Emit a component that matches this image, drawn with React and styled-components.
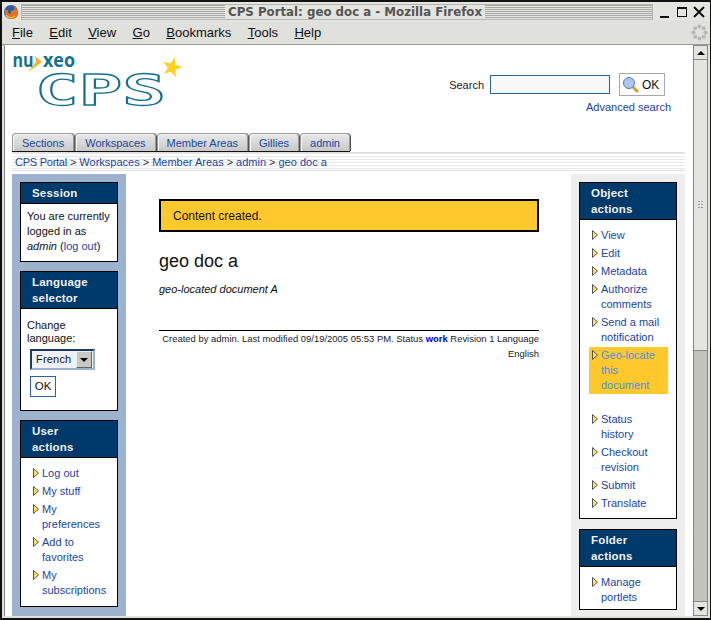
import React from "react";
import styled, { createGlobalStyle } from "styled-components";

const Global = createGlobalStyle`
  html, body { margin: 0; padding: 0; background: #fff; }
  body { font-family: "Liberation Sans", Arial, sans-serif; }
  a { color: #1c45a0; text-decoration: none; }
`;

const Frame = styled.div`
  width: 711px; height: 620px; box-sizing: border-box; overflow: hidden;
  display: flex; flex-direction: column; background: #e0e0dc; padding-bottom: 2px;
  border: 2px solid #111; border-right-width: 1px;
`;
const TitleBar = styled.div`
  height: 19px; flex: none; display: flex; align-items: center; background: #e4e4e0; padding: 0 4px 0 1px;
`;
const Fox = styled.svg`width: 16px; height: 16px; flex: none; margin-right: 2px;`;
const Groove = styled.div`
  flex: 1; height: 14px; display: flex; align-items: center; justify-content: center; padding-left: 36px;
  background: repeating-linear-gradient(180deg, #a8a8a4 0 1px, #e4e4e0 1px 2px);
  border: 1px solid #b4b4b0;
`;
const Title = styled.span`
  background: #e4e4e0; padding: 0 3px; font: bold 11.8px "DejaVu Sans", sans-serif; color: #555; line-height: 14px;
`;
const WinButtons = styled.div`display: flex; gap: 3px; margin-left: 5px; align-items: center;`;
const MenuBar = styled.div`
  height: 23px; flex: none; display: flex; align-items: center; padding-left: 10px; gap: 16.400px;
  background: #e0e0dc; border-bottom: 1px solid #9a9a96; position: relative;
  font: 13px "Liberation Sans", sans-serif; color: #111;
`;
const MenuItem = styled.span`
  &::first-letter { text-decoration: underline; }
`;
const Throbber = styled.svg`position: absolute; right: 2px; top: 3px; width: 17px; height: 17px;`;
const Viewport = styled.div`flex: 1; min-height: 0; display: flex; margin-left: 2px; border-left: 1px solid #888;`;
const Page = styled.div`flex: 1; min-width: 0; overflow: hidden; background: #fff; padding: 0 8px 0 7px; color: #111; font-size: 11px;`;
const Scrollbar = styled.div`
  width: 15px; flex: none; margin-right: 2px; display: flex; flex-direction: column; background: #c3c3be;
  border: 1px solid #888; box-sizing: border-box;
`;
const ScrollBtn = styled.div`
  height: 13px; flex: none; display: flex; align-items: center; justify-content: center; background: #e4e4e0;
  ${p => p.$down ? "border-top: 1px solid #888;" : "border-bottom: 1px solid #888;"}
  &::after { content: ""; border-left: 4px solid transparent; border-right: 4px solid transparent;
    ${p => p.$down ? "border-top: 4px solid #000;" : "border-bottom: 4px solid #000;"} }
`;
const Thumb = styled.div`
  height: 290px; flex: none; background: #e4e4e0; border-bottom: 1px solid #888; display: flex; align-items: center; justify-content: center;
`;
const Track = styled.div`flex: 1;`;

const Header = styled.header`height: 88px; display: flex; justify-content: space-between;`;
const Logo = styled.svg`width: 180px; height: 70px; flex: none;`;
const SearchArea = styled.div`margin-top: 28px; margin-right: 14px; display: flex; flex-direction: column; align-items: flex-end;`;
const SearchRow = styled.div`display: flex; align-items: center; gap: 6px; margin-right: 6px;`;
const SearchLabel = styled.span`color: #222;`;
const SearchInput = styled.div`width: 118px; height: 17px; border: 1px solid #2a6496; background: #f8f8f8; margin-right: 3px;`;
const OkIconButton = styled.div`
  height: 23px; width: 46px; box-sizing: border-box; border: 1px solid #a8a8a8; background: #fff; display: flex; align-items: center; gap: 2px; padding-left: 2px; font-size: 12px;
`;
const AdvLink = styled.a`margin-top: 5px; font-size: 11px;`;

const TabStrip = styled.nav`border-bottom: 1px solid #ddd;`;
const Tabs = styled.div`display: inline-flex; vertical-align: top; gap: 1px; height: 18px; border-bottom: 1px solid #111;`;
const Tab = styled.div`
  height: 18px; box-sizing: border-box; padding: 0 9px; display: flex; align-items: center; white-space: nowrap;
  border: 1px solid #999; border-bottom: none; border-radius: 4px 4px 0 0;
  background: linear-gradient(180deg, #e8e8e8, #c8c8c8); color: #1c45a0; font-size: 11px;
  box-shadow: inset 1px 1px 0 #f6f6f6, 1px 0 0 #555;
`;
const Crumbs = styled.div`
  height: 17px; display: flex; align-items: center; padding-left: 3px; gap: 3px;
  background: repeating-linear-gradient(180deg, #e8e8e8 0 1px, #fff 1px 3px);
  border-bottom: 1px solid #e0e0e0; font-size: 11px; color: #333;
`;
const HomeCrumb = styled.a`letter-spacing: -.25px;`;
const Columns = styled.div`display: flex; margin-top: 3px; align-items: stretch; height: 460px;`;
const Side = styled.aside`
  width: 114px; flex: none; box-sizing: border-box; padding: 8px; display: flex; flex-direction: column; gap: ${p => p.$gap}px;
  background: ${p => p.$bg};
`;
const Main = styled.main`flex: 1; min-width: 0; padding: 25px 32px 0 33px;`;
const Box = styled.section`border: 1px solid #000; background: #fff; flex: none;`;
const BoxHead = styled.h3`
  margin: 0; background: #003a6b; font: bold 11.5px/16px "Liberation Sans", sans-serif; padding: 2px 22px 2px 11px; min-height: 16px;
  border-bottom: 1px solid #000; letter-spacing: .2px; color: #f0f0f0;
`;
const BoxBody = styled.div`padding: 5px 6px 7px; line-height: 15px;`;
const List = styled.ul`list-style: none; margin: 0; padding: 8px 8px ${p => p.$pb}px 12px;`;
const Item = styled.li`
  position: relative; padding: 0 2px 0 9px; margin-bottom: 3px; line-height: 15px;
  ${p => p.$hot ? "background:#ffc82d; margin-left:-3px; margin-top:-1px; padding:1px 0 1px 12px; margin-bottom: 18px;" : ""}
`;
const Arrow = styled.svg`position: absolute; top: ${p => p.$hot ? 3 : 2}px; left: ${p => p.$hot ? 3 : 0}px; width: 6px; height: 10px;`;
const ItemLink = styled.a`color: ${p => p.$hot ? "#4a90e0" : "#1c45a0"};`;
const LangLabel = styled.div`margin-top: 5px; line-height: 13px;`;
const SelectBox = styled.div`
  margin: 4px 0 0 3px; width: 65px; height: 21px; box-sizing: border-box; background: #eef1f5; border: 2px solid; border-color: #1a3a60 #9db2cd #9db2cd #1a3a60;
  display: flex; align-items: center; justify-content: space-between; padding: 0 1px 0 4px; letter-spacing: .2px;
`;
const SelectArrow = styled.span`
  width: 14px; height: 15px; background: #c8c8c4; display: flex; align-items: center; justify-content: center; border: 1px solid; border-color: #eee #666 #666 #eee;
  &::after { content: ""; border-left: 4px solid transparent; border-right: 4px solid transparent; border-top: 4px solid #000; }
`;
const OkButton = styled.div`
  margin: 6px 0 6px 3px; width: 26px; height: 21px; box-sizing: border-box; border: 1px solid #2a6496; display: flex; align-items: center; justify-content: center; font-size: 11.5px;
`;
const Message = styled.div`
  height: 33px; box-sizing: border-box; border: 2px solid #000; background: #ffc82d; display: flex; align-items: center; padding-left: 12px; font-size: 12px;
`;
const DocTitle = styled.h1`margin: 18px 0 0; font: 18px/22px "Liberation Sans", sans-serif; color: #111;`;
const Desc = styled.p`margin: 10px 0 0; font-style: italic; font-size: 11px; line-height: 15px;`;
const Info = styled.div`margin-top: 33px; border-top: 1px solid #000; text-align: right; font-size: 9.450px; line-height: 15px; color: #222;`;
const Status = styled.a`color: #0000e0; font-weight: bold;`;

const ArrowIcon = ({ hot }) => (
  <Arrow $hot={hot} viewBox="0 0 6 10"><path d="M.5.5 5.5 5 .5 9.5z" fill="#ffe25a" stroke="#555" strokeWidth="1" /></Arrow>
);
const Links = ({ items, pb }) => (
  <List $pb={pb}>
    {items.map((t) => (
      <Item key={t} $hot={t.startsWith("Geo")}>
        <ArrowIcon hot={t.startsWith("Geo")} />
        <ItemLink href="#" $hot={t.startsWith("Geo")}>{t}</ItemLink>
      </Item>
    ))}
  </List>
);

const starPoints = Array.from({ length: 10 }, (_, i) => {
  const a = ((i * 36 - 75) * Math.PI) / 180;
  const r = i % 2 ? 4.2 : 10.5;
  return `${160 + r * Math.cos(a)},${22.5 + r * Math.sin(a)}`;
}).join(" ");

export default function App() {
  return (
    <>
      <Global />
      <Frame>
        <TitleBar>
          <Fox viewBox="0 0 16 16">
            <circle cx="8" cy="8" r="7" fill="#2a5aa8" />
            <path d="M2 5C1 10 4 15 9 15c4 0 6-3 6-6 0-3-2-6-5-7 2 2 2 4 0 4-2 1-3 2-2 4-2 0-4-2-3-4C3 6 2.500 6 2 5z" fill="#e8701c" />
            <path d="M3 11c2 3 6 4 9 1" stroke="#f7b32b" strokeWidth="1.500" fill="none" />
          </Fox>
          <Groove><Title>CPS Portal: geo doc a - Mozilla Firefox</Title></Groove>
          <WinButtons>
            <svg width="14" height="14" viewBox="0 0 14 14"><path d="M2 12h9" stroke="#111" strokeWidth="2" /></svg>
            <svg width="14" height="14" viewBox="0 0 14 14"><rect x="2.500" y="3.500" width="9" height="8" fill="none" stroke="#111" /><path d="M2 3h10" stroke="#111" strokeWidth="2" /></svg>
            <svg width="14" height="14" viewBox="0 0 14 14"><path d="M2 2l10 10M12 2 2 12" stroke="#111" strokeWidth="2" /></svg>
          </WinButtons>
        </TitleBar>
        <MenuBar>
          {["File", "Edit", "View", "Go", "Bookmarks", "Tools", "Help"].map((m) => <MenuItem key={m}>{m}</MenuItem>)}
          <Throbber viewBox="0 0 17 17">
            {[0, 45, 90, 135, 180, 225, 270, 315].map((a) => (
              <circle key={a} cx={8.500 + 6 * Math.cos((a * Math.PI) / 180)} cy={8.500 + 6 * Math.sin((a * Math.PI) / 180)} r="2" fill="#b8b8b4" />
            ))}
          </Throbber>
        </MenuBar>
        <Viewport>
          <Page>
            <Header>
              <Logo viewBox="0 0 180 70">
                <text x="0.500" y="22" fontFamily="Open Sans, sans-serif" fontWeight="700" fontSize="20" fill="#14708f" textLength="21" lengthAdjust="spacingAndGlyphs">nu</text>
                <text x="31" y="22" fontFamily="Open Sans, sans-serif" fontWeight="700" fontSize="20" fill="#14708f" textLength="32" lengthAdjust="spacingAndGlyphs">xeo</text>
                <path d="M23 11l7 6-14 10 8-10z" fill="#f5b324" />
                <text x="23" y="60" fontFamily="DejaVu Sans Mono, monospace" fontWeight="700" fontSize="42.500" fill="#fff" stroke="#14708f" strokeWidth="1.300" textLength="131" lengthAdjust="spacingAndGlyphs">CPS</text>
                <polygon points={starPoints} fill="#ffd21f" />
              </Logo>
              <SearchArea>
                <SearchRow>
                  <SearchLabel>Search</SearchLabel>
                  <SearchInput />
                  <OkIconButton>
                    <svg width="18" height="18" viewBox="0 0 18 18"><path d="M10 10l6 6" stroke="#d8a030" strokeWidth="3" /><circle cx="7" cy="7" r="5.500" fill="#a8c8f0" stroke="#5878b0" /></svg>
                    OK
                  </OkIconButton>
                </SearchRow>
                <AdvLink href="#">Advanced search</AdvLink>
              </SearchArea>
            </Header>
            <TabStrip>
              <Tabs>
                {["Sections", "Workspaces", "Member Areas", "Gillies", "admin"].map((t) => <Tab key={t}>{t}</Tab>)}
              </Tabs>
            </TabStrip>
            <Crumbs>
              <HomeCrumb href="#">CPS Portal</HomeCrumb>&gt;<a href="#">Workspaces</a>&gt;<a href="#">Member Areas</a>&gt;<a href="#">admin</a>&gt;<a href="#">geo doc a</a>
            </Crumbs>
            <Columns>
              <Side $bg="#9db2cd" $gap={9}>
                <Box>
                  <BoxHead>Session</BoxHead>
                  <BoxBody>You are currently logged in as <em>admin</em> (<a href="#">log out</a>)</BoxBody>
                </Box>
                <Box>
                  <BoxHead>Language selector</BoxHead>
                  <BoxBody>
                    <LangLabel>Change language:</LangLabel>
                    <SelectBox>French<SelectArrow /></SelectBox>
                    <OkButton>OK</OkButton>
                  </BoxBody>
                </Box>
                <Box>
                  <BoxHead>User actions</BoxHead>
                  <Links pb={5} items={["Log out", "My stuff", "My preferences", "Add to favorites", "My subscriptions"]} />
                </Box>
                <Box><BoxHead /></Box>
              </Side>
              <Main>
                <Message>Content created.</Message>
                <DocTitle>geo doc a</DocTitle>
                <Desc>geo-located document A</Desc>
                <Info>Created by admin. Last modified 09/19/2005 05:53 PM. Status <Status href="#">work</Status> Revision 1 Language English</Info>
              </Main>
              <Side $bg="#eeeeee" $gap={10}>
                <Box>
                  <BoxHead>Object actions</BoxHead>
                  <Links pb={4} items={["View", "Edit", "Metadata", "Authorize comments", "Send a mail notification", "Geo-locate this document", "Status history", "Checkout revision", "Submit", "Translate"]} />
                </Box>
                <Box>
                  <BoxHead>Folder actions</BoxHead>
                  <Links pb={1} items={["Manage portlets"]} />
                </Box>
              </Side>
            </Columns>
          </Page>
          <Scrollbar>
            <ScrollBtn />
            <Thumb>
              <svg width="5" height="9" viewBox="0 0 5 9" fill="#999"><rect width="2" height="1" /><rect x="3" width="2" height="1" /><rect y="3" width="2" height="1" /><rect x="3" y="3" width="2" height="1" /><rect y="6" width="2" height="1" /><rect x="3" y="6" width="2" height="1" /></svg>
            </Thumb>
            <Track />
            <ScrollBtn $down />
          </Scrollbar>
        </Viewport>
      </Frame>
    </>
  );
}
